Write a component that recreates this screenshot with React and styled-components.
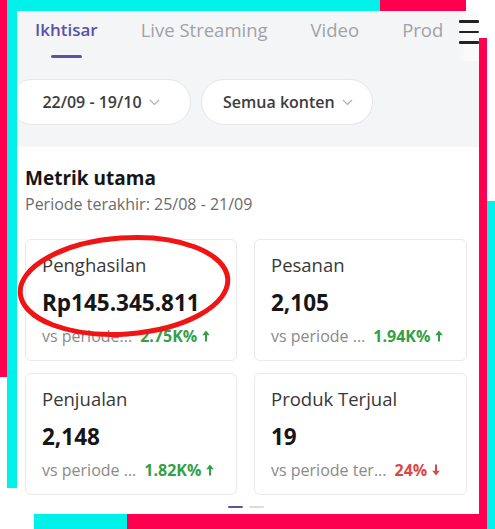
import styled, { createGlobalStyle } from 'styled-components'

const GlobalStyle = createGlobalStyle`
  html, body {
    margin: 0;
    background: #ffffff;
  }
  body {
    font-family: "Open Sans", Lato, sans-serif;
  }
`

const RED = '#ff0050'
const CYAN = '#00f0ea'

const strip = (color, x, y, w, h) => ({ color, x, y, w, h })

// the glitch frame around the screenshot
const strips = [
  strip(RED, 0, 0, 7, 377),
  strip(CYAN, 7, 0, 373, 11),
  strip(CYAN, 7, 0, 10, 488),
  strip(RED, 380, 0, 86, 11),
  strip(RED, 479, 38, 8, 491),
  strip(CYAN, 487, 201, 8, 328),
  strip(CYAN, 34, 514, 93, 15),
  strip(RED, 127, 514, 352, 15),
]

const Frame = styled.div`
  width: 495px;
  height: 529px;
  box-sizing: border-box;
  padding: 11px 0 0 17px;
  background-repeat: no-repeat;
  background-image: ${strips.map((s) => `linear-gradient(${s.color}, ${s.color})`).join(', ')};
  background-position: ${strips.map((s) => `${s.x}px ${s.y}px`).join(', ')};
  background-size: ${strips.map((s) => `${s.w}px ${s.h}px`).join(', ')};
`

const Screen = styled.div`
  width: 462px;
  height: 503px;
  background: #ffffff;
  overflow: hidden;
  display: flex;
  flex-direction: column;
`

const Header = styled.div`
  background: #f4f5f7;
  height: 136px;
  flex: none;
  display: flex;
  flex-direction: column;
`

const TabBar = styled.div`
  display: flex;
  height: 50px;
`

const Tabs = styled.div`
  flex: 1;
  display: flex;
  gap: 43px;
  padding-left: 18px;
  overflow: hidden;
`

const Tab = styled.div`
  flex: none;
  display: flex;
  flex-direction: column;
  align-items: center;
  padding-top: 9px;
  font-size: ${(p) => (p.$active ? 17 : 18.5)}px;
  line-height: 20px;
  font-weight: ${(p) => (p.$active ? 600 : 400)};
  color: ${(p) => (p.$active ? '#5a52a8' : '#a2a2a6')};
  white-space: nowrap;

  &::after {
    content: '';
    width: 31px;
    height: 3px;
    border-radius: 2px;
    margin-top: 15px;
    background: ${(p) => (p.$active ? '#5a52a8' : 'transparent')};
  }
`

const Menu = styled.div`
  flex: none;
  width: 20px;
  margin-left: 2px;
  padding: 9px 0 0 2px;
  display: flex;
  flex-direction: column;
  gap: 8px;
  background: linear-gradient(to right, rgba(250, 250, 251, 0), #fafafb 40%);

  span {
    display: block;
    height: 2.5px;
    border-radius: 1px;
    background: #222;
  }
`

const Filters = styled.div`
  display: flex;
  gap: 10px;
  padding-top: 18px;
`

const Pill = styled.div`
  flex: none;
  height: 46px;
  box-sizing: border-box;
  width: ${(p) => (p.$width ? `${p.$width}px` : 'auto')};
  border: 1px solid #e6e6e8;
  border-radius: 23px;
  background: #fff;
  display: flex;
  align-items: center;
  justify-content: center;
  gap: 7px;
  padding: 0 19px 0 21px;
  margin-left: ${(p) => p.$shift || 0}px;
  font-size: 16px;
  font-weight: 600;
  color: #3c3c3e;
`

const Body = styled.div`
  padding: 19px 12px 0 8px;
  display: flex;
  flex-direction: column;
`

const Title = styled.div`
  font-size: 19px;
  line-height: 24px;
  font-weight: 700;
  color: #161616;
`

const Subtitle = styled.div`
  margin-top: 4px;
  font-size: 16px;
  line-height: 20px;
  color: #6b6b6b;
`

const Grid = styled.div`
  margin-top: 25px;
  display: grid;
  grid-template-columns: 212px 213px;
  grid-auto-rows: 122px;
  column-gap: 17px;
  row-gap: 12px;
`

const Card = styled.div`
  position: relative;
  box-sizing: border-box;
  border: 1px solid #e9e9eb;
  border-radius: 6px;
  padding: 14px 0 0 16px;
  display: flex;
  flex-direction: column;
`

const Label = styled.div`
  font-size: 18.5px;
  line-height: 22px;
  color: #383838;
  white-space: nowrap;
`

const Value = styled.div`
  margin-top: 14px;
  font-size: 22.5px;
  line-height: 26px;
  font-weight: 700;
  color: #161616;
`

const Compare = styled.div`
  margin-top: 10px;
  display: flex;
  align-items: center;
  gap: 8px;
  font-size: 16px;
  line-height: 20px;
  color: #8a8a8a;
  white-space: nowrap;
`

const Change = styled.span`
  display: flex;
  align-items: center;
  gap: 5px;
  font-weight: 700;
  color: ${(p) => (p.$down ? '#d84848' : '#34a046')};
`

const Pager = styled.div`
  margin-top: 11px;
  display: flex;
  justify-content: center;
  gap: 6px;

  span {
    width: 15px;
    height: 2px;
    border-radius: 1px;
    background: #dcdcdf;
  }
  span:first-child {
    background: #5a52a8;
  }
`

const Highlight = styled.svg`
  position: absolute;
  left: -9px;
  top: -6px;
  width: 214px;
  height: 104px;
  overflow: visible;
  pointer-events: none;
`

const Chevron = () => (
  <svg width="11" height="7" viewBox="0 0 11 7">
    <path d="M1 1l4.5 4.5L10 1" fill="none" stroke="#b0b0b4" strokeWidth="1.2" />
  </svg>
)

const Arrow = ({ down }) => (
  <svg width="8" height="12" viewBox="0 0 8 12" style={down ? { transform: 'rotate(180deg)' } : undefined}>
    <path d="M4 0.5L7.8 5.2H5V11.5H3V5.2H0.2Z" fill="currentColor" />
  </svg>
)

const metrics = [
  { label: 'Penghasilan', value: 'Rp145.345.811', vs: 'vs periode...', change: '2.75K%', circled: true },
  { label: 'Pesanan', value: '2,105', vs: 'vs periode ...', change: '1.94K%' },
  { label: 'Penjualan', value: '2,148', vs: 'vs periode ...', change: '1.82K%' },
  { label: 'Produk Terjual', value: '19', vs: 'vs periode ter...', change: '24%', down: true },
]

export default function App() {
  return (
    <>
      <GlobalStyle />
      <Frame>
        <Screen>
          <Header>
            <TabBar>
              <Tabs>
                <Tab $active>Ikhtisar</Tab>
                <Tab>Live Streaming</Tab>
                <Tab>Video</Tab>
                <Tab>Prod</Tab>
              </Tabs>
              <Menu>
                <span />
                <span />
                <span />
              </Menu>
            </TabBar>
            <Filters>
              <Pill $shift={-8} $width={182}>
                22/09 - 19/10 <Chevron />
              </Pill>
              <Pill>
                Semua konten <Chevron />
              </Pill>
            </Filters>
          </Header>
          <Body>
            <Title>Metrik utama</Title>
            <Subtitle>Periode terakhir: 25/08 - 21/09</Subtitle>
            <Grid>
              {metrics.map((m) => (
                <Card key={m.label}>
                  <Label>{m.label}</Label>
                  <Value>{m.value}</Value>
                  <Compare>
                    {m.vs}
                    <Change $down={m.down}>
                      {m.change} <Arrow down={m.down} />
                    </Change>
                  </Compare>
                  {m.circled && (
                    <Highlight viewBox="0 0 214 104">
                      <ellipse
                        cx="107"
                        cy="52"
                        rx="104"
                        ry="48"
                        fill="none"
                        stroke="#f01414"
                        strokeWidth="5"
                        transform="rotate(-4 107 52)"
                      />
                    </Highlight>
                  )}
                </Card>
              ))}
            </Grid>
            <Pager>
              <span />
              <span />
            </Pager>
          </Body>
        </Screen>
      </Frame>
    </>
  )
}
